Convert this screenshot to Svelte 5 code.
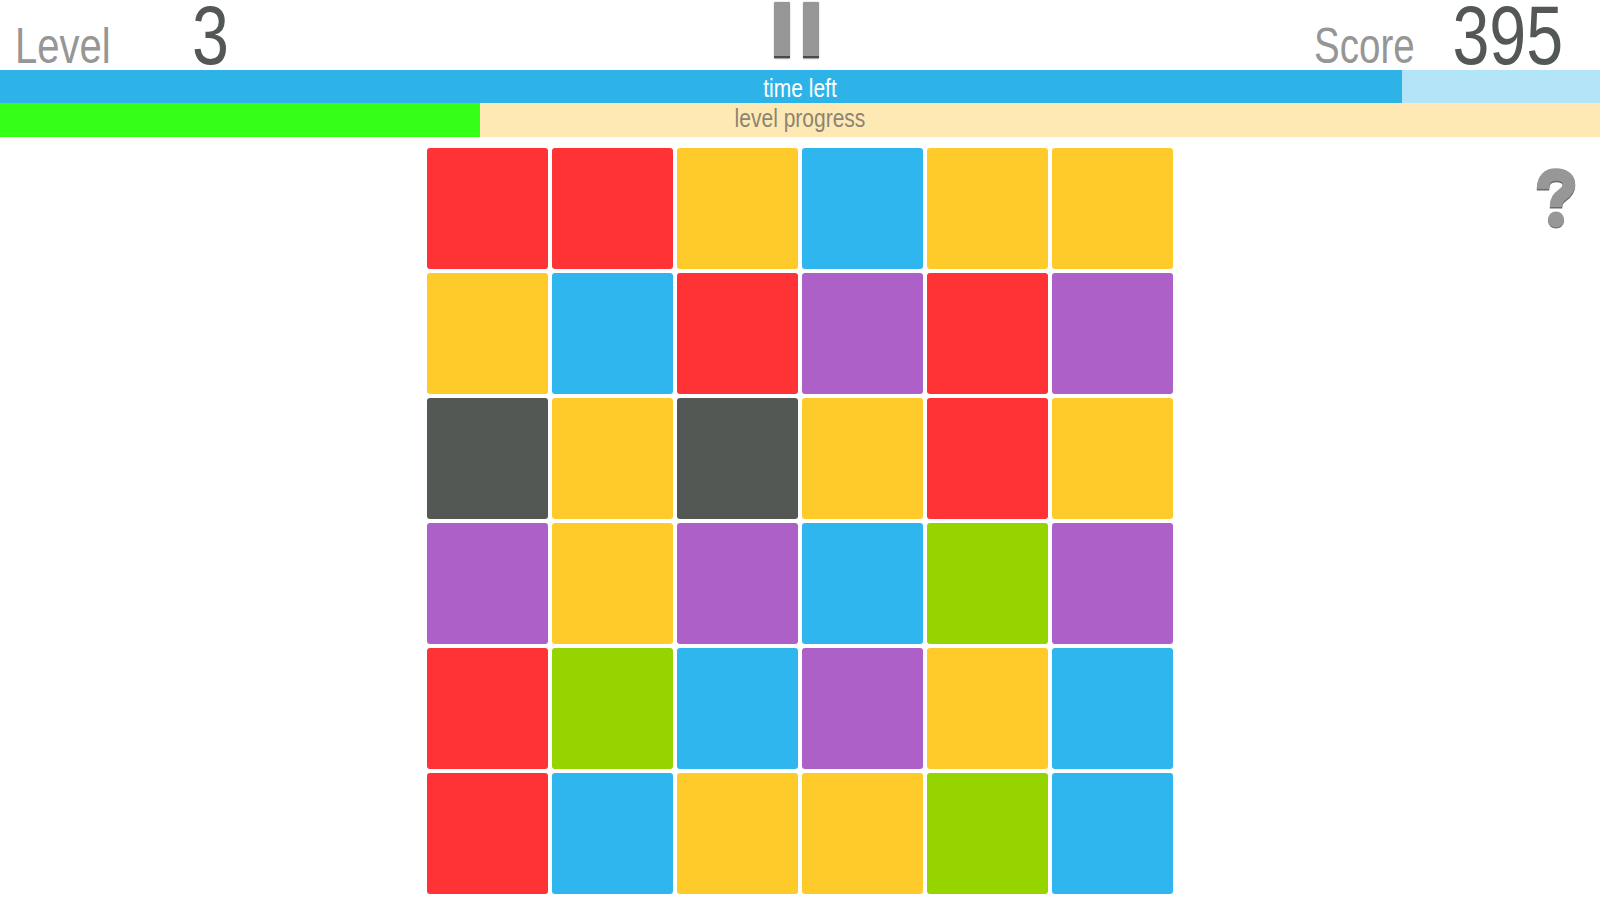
<script>
  const colors = {
    r: 'red',
    y: 'yellow',
    b: 'blue',
    p: 'purple',
    d: 'dark',
    g: 'green'
  }

  const rows = ['rrybyy', 'ybrprp', 'dydyry', 'pypbgp', 'rgbpyb', 'rbyygb']
  const cells = rows.flatMap(row => row.split('').map(c => colors[c]))

  let timeLeft = 87.6
  let progress = 30

  const helpPath = 'M7 21 C7 11 12 6.5 20 6.5 C28 6.5 33 10.5 33 16.5 C33 21 30.5 23.5 26.5 26.5 C22.5 29.5 20 32 20 39'
</script>

<div class="game">
  <header class="header">
    <div class="stat">
      <span class="label label--level">Level</span>
      <span class="value value--level">3</span>
    </div>
    <div class="pause">
      <span class="pause__bar"></span>
      <span class="pause__bar"></span>
    </div>
    <div class="stat stat--score">
      <span class="label label--score">Score</span>
      <span class="value value--score">395</span>
    </div>
  </header>

  <div class="bar bar--time">
    <div class="bar__fill bar__fill--time" style="width: {timeLeft}%"></div>
    <span class="bar__text bar__text--time">time left</span>
  </div>
  <div class="bar bar--level">
    <div class="bar__fill bar__fill--level" style="width: {progress}%"></div>
    <span class="bar__text bar__text--level">level progress</span>
  </div>

  <main class="board-row">
    <div class="board">
      {#each cells as color}
        <div class="cell cell--{color}"></div>
      {/each}
    </div>
    <svg class="help" width="40" height="62" viewBox="0 0 40 62">
      <g fill="none">
        <path d={helpPath} stroke="#6a6a6a" stroke-width="12.5" transform="translate(0 1.5)"/>
        <path d={helpPath} stroke="#979797" stroke-width="12.5"/>
      </g>
      <circle cx="20" cy="52.5" r="8" fill="#6a6a6a"/>
      <circle cx="20" cy="51.5" r="8" fill="#979797"/>
    </svg>
  </main>
</div>

<style>
  :global(body) {
    margin: 0;
    background: #fff;
    font-family: "Liberation Sans", Arial, sans-serif;
  }

  .game {
    width: 1600px;
    height: 900px;
    overflow: hidden;
    display: flex;
    flex-direction: column;
  }

  .header {
    height: 70px;
    display: grid;
    grid-template-columns: 1fr auto 1fr;
    align-items: start;
  }

  .stat {
    display: flex;
    align-items: baseline;
    padding-left: 15px;
    height: 70px;
  }

  .stat--score {
    justify-content: flex-end;
    padding: 0 37px 0 0;
  }

  .label {
    font-size: 50px;
    line-height: 70px;
    color: #969696;
    transform: translateY(-1px) scaleX(0.8);
    transform-origin: left;
  }

  .label--level {
    width: 177px;
  }

  .label--score {
    transform: translateY(-1px) scaleX(0.77);
    transform-origin: right;
    margin-right: 8px;
  }

  .value {
    font-size: 84px;
    line-height: 70px;
    color: #535855;
    transform: scaleX(0.79);
  }

  .value--level {
    transform-origin: left;
  }

  .value--score {
    transform-origin: right;
  }

  .pause {
    display: flex;
    gap: 13px;
    padding-top: 2px;
    margin-left: -7px;
  }

  .pause__bar {
    width: 16px;
    height: 57px;
    border-radius: 1px;
    background: linear-gradient(#969696 0 54px, #4a4a4a 54px 56px, #a5a5a5 56px);
    box-shadow: 0 0 2px #c4c4c4;
  }

  .bar {
    position: relative;
    height: 33px;
    flex: none;
  }

  .bar--time {
    background: #b4e4f7;
  }

  .bar--level {
    height: 34px;
    background: #fee9b5;
  }

  .bar__fill {
    height: 100%;
  }

  .bar__fill--time {
    background: #2db3e8;
  }

  .bar__fill--level {
    background: #33ff17;
  }

  .bar__text {
    position: absolute;
    inset: 0;
    text-align: center;
    font-size: 25px;
    line-height: 36px;
    transform: scaleX(0.84);
  }

  .bar__text--time {
    color: #fff;
  }

  .bar__text--level {
    color: #8c8573;
    line-height: 31px;
  }

  .board-row {
    display: grid;
    grid-template-columns: 1fr auto 1fr;
    padding-top: 11px;
  }

  .board {
    grid-column: 2;
    display: grid;
    grid-template-columns: repeat(6, 121px);
    grid-auto-rows: 121px;
    gap: 4px;
  }

  .help {
    justify-self: end;
    margin: 20px 24px 0 0;
  }

  .cell {
    border-radius: 3px;
  }

  .cell--red { background: #ff3236; }
  .cell--yellow { background: #ffcb2b; }
  .cell--blue { background: #2fb6ee; }
  .cell--purple { background: #ac60c8; }
  .cell--dark { background: #535855; }
  .cell--green { background: #96d400; }
</style>
